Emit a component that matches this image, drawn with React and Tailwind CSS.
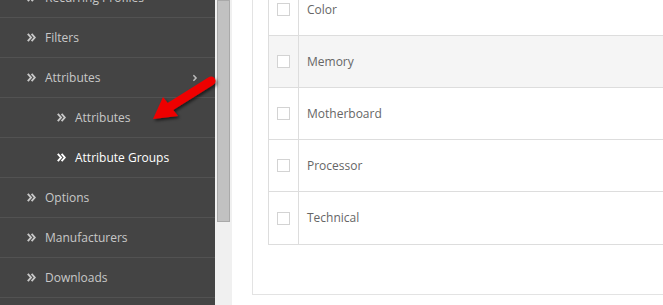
import React from "react";
import { FaAngleRight } from "react-icons/fa";

const menu = [
  { label: "Recurring Profiles", level: 0 },
  { label: "Filters", level: 0 },
  { label: "Attributes", level: 0, caret: true },
  { label: "Attributes", level: 1 },
  { label: "Attribute Groups", level: 1, active: true },
  { label: "Options", level: 0 },
  { label: "Manufacturers", level: 0 },
  { label: "Downloads", level: 0 },
];

const rows = ["Color", "Memory", "Motherboard", "Processor", "Technical"];

function DoubleChevron() {
  return (
    <svg width="9" height="9" viewBox="0 0 9 9" className="mr-[9px] shrink-0" fill="none" stroke="currentColor" strokeWidth="1.9" strokeLinejoin="miter">
      <polyline points="0.8,0.8 4,4.5 0.8,8.2" />
      <polyline points="4.6,0.8 7.8,4.5 4.6,8.2" />
    </svg>
  );
}

function MenuItem({ item }) {
  return (
    <div
      className={`flex h-[40px] shrink-0 items-center border-b border-[#525252] ${
        item.level === 1 ? "pl-[57px]" : "pl-[27px]"
      } ${item.active ? "text-white font-medium" : "text-[#c8c8c8]"}`}
    >
      <DoubleChevron />
      <span className="flex-1 whitespace-nowrap">{item.label}</span>
      {item.caret && <FaAngleRight className="w-[6px] h-[10px] mr-[17px] text-[#bbbbbb]" />}
    </div>
  );
}

export default function App() {
  return (
    <div
      className="relative flex w-[663px] h-[305px] overflow-hidden bg-white text-[12px]"
      style={{ fontFamily: '"Open Sans", "Liberation Sans", sans-serif' }}
    >
      <div className="w-[215px] shrink-0 bg-[#444444] flex flex-col overflow-hidden">
        <div className="mt-[-22px] flex flex-col">
          {menu.map((m, i) => (
            <MenuItem key={i} item={m} />
          ))}
        </div>
      </div>
      <div className="w-[17px] shrink-0 bg-[#f0f0f0] flex flex-col items-center">
        <div className="w-[13px] h-[222px] bg-[#c1c1c1] border border-[#a9a9a9]" />
      </div>
      <div className="flex-1 bg-white pl-[20px] overflow-hidden">
        <div className="mt-[-40px] h-[335px] w-[460px] border border-[#e3e3e3] pl-[15px] pt-[22px]">
          <div className="border border-[#dddddd] border-r-0">
            {rows.map((r, i) => (
              <div
                key={r}
                className={`flex h-[52px] ${i < rows.length - 1 ? "border-b border-[#dddddd]" : ""} ${
                  r === "Memory" ? "bg-[#f5f5f5]" : ""
                }`}
              >
                <div className="w-[30px] shrink-0 border-r border-[#dddddd] flex items-center justify-center">
                  <div className="w-[13px] h-[13px] border border-[#d3d3d3] bg-white" />
                </div>
                <div className="flex items-center pl-[8px] text-[#666666]">{r}</div>
              </div>
            ))}
          </div>
        </div>
      </div>
      <svg
        className="absolute left-[140px] top-[66px]"
        width="90"
        height="66"
        viewBox="140 66 90 66"
      >
        <defs>
          <filter id="sh" x="-20%" y="-20%" width="140%" height="140%">
            <feDropShadow dx="1.5" dy="2" stdDeviation="1.5" floodColor="#000" floodOpacity="0.6" />
          </filter>
        </defs>
        <g filter="url(#sh)">
          <line x1="211" y1="81" x2="168" y2="108" stroke="#ee0000" strokeWidth="9" strokeLinecap="round" />
          <polygon points="153,119 163,97 178,116" fill="#ee0000" />
        </g>
      </svg>
    </div>
  );
}
